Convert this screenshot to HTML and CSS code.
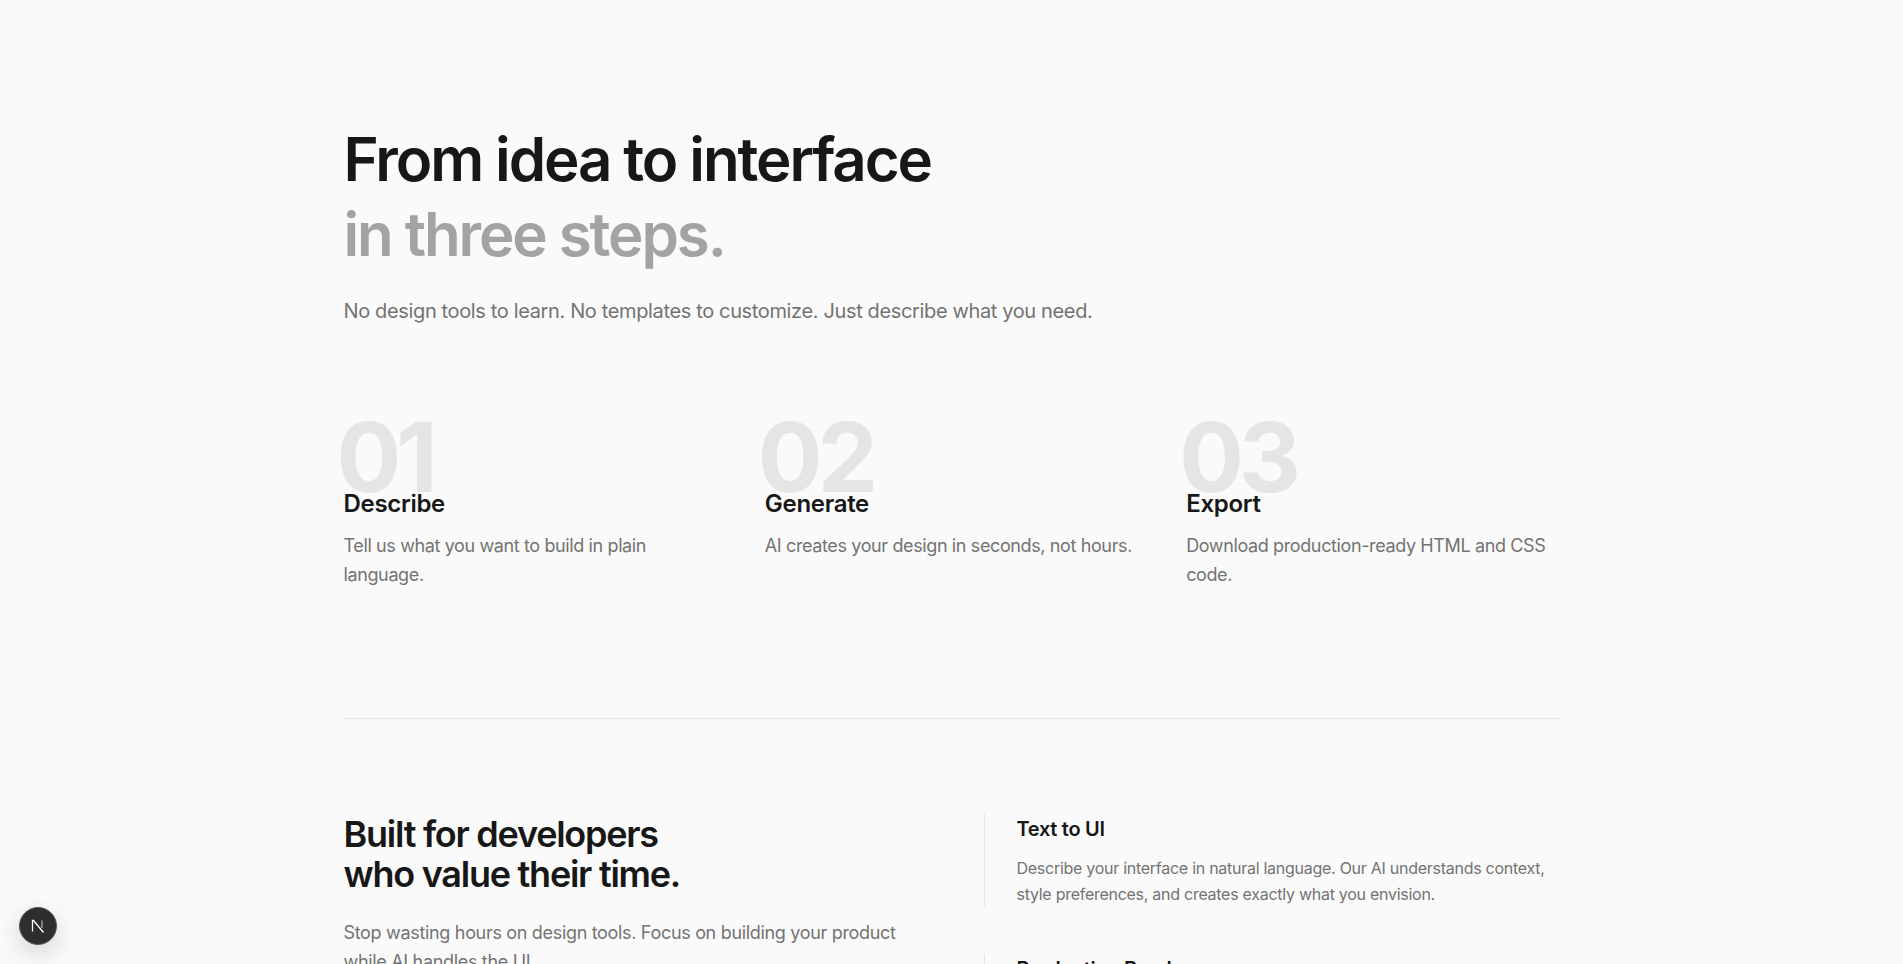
FILE: index.html
```html
<!DOCTYPE html>
<html lang="en">

<head>
    <meta charset="UTF-8">
    <title>From idea to interface</title>
    <link rel="stylesheet" href="styles.css">
</head>

<body>
    <main class="container">
        <section class="steps">
            <h1>From idea to interface<br><span class="muted">in three steps.</span></h1>
            <p class="lead">No design tools to learn. No templates to customize. Just describe what you need.</p>

            <div class="steps-grid">
                <div class="step">
                    <div class="step-num">01</div>
                    <h3>Describe</h3>
                    <p>Tell us what you want to build in plain language.</p>
                </div>
                <div class="step">
                    <div class="step-num">02</div>
                    <h3>Generate</h3>
                    <p>AI creates your design in seconds, not hours.</p>
                </div>
                <div class="step">
                    <div class="step-num">03</div>
                    <h3>Export</h3>
                    <p>Download production-ready HTML and CSS code.</p>
                </div>
            </div>
        </section>

        <section class="features">
            <div class="features-intro">
                <h2>Built for developers<br>who value their time.</h2>
                <p>Stop wasting hours on design tools. Focus on building your product while AI handles the UI.</p>
            </div>
            <div class="features-list">
                <div class="feature">
                    <h4>Text to UI</h4>
                    <p>Describe your interface in natural language. Our AI understands context, style preferences, and creates exactly what you envision.</p>
                </div>
                <div class="feature">
                    <h4>Production Ready</h4>
                    <p>Get clean HTML and CSS code you can ship right away, with no cleanup needed.</p>
                </div>
            </div>
        </section>
    </main>

    <div class="dev-badge">
        <svg width="14" height="14" viewBox="0 0 14 14" fill="none">
            <path d="M1.5 12.5V1.5h1L12.5 13.5" stroke="#fff" stroke-width="1.3"/>
            <path d="M11 1.5v7.5" stroke="#aaa" stroke-width="1.3"/>
        </svg>
    </div>
</body>

</html>
```

FILE: styles.css
```css
html,
body {
    height: 100%;
    overflow: hidden;
}

body {
    font-family: Inter, "Noto Sans", sans-serif;
    background-color: #fafafa;
    color: #171717;
    margin: 0;
}

h1,
h2,
h3,
h4,
p {
    margin: 0;
}

.container {
    width: 1216px;
    margin: 0 auto;
}

.steps {
    padding-top: 122px;
    padding-bottom: 129px;
    border-bottom: 1px solid #e5e5e5;
}

h1 {
    font-size: 60px;
    line-height: 75px;
    font-weight: 600;
    letter-spacing: -2.1px;
}

.muted {
    color: #a3a3a3;
}

.lead {
    margin-top: 25px;
    font-size: 20px;
    line-height: 28px;
    color: #737373;
    letter-spacing: -0.36px;
}

.steps-grid {
    display: grid;
    grid-template-columns: repeat(3, 1fr);
    gap: 48px;
    margin-top: 82px;
}

.step-num {
    font-size: 96px;
    line-height: 100px;
    font-weight: 700;
    color: #e5e5e5;
    margin-left: -7px;
    margin-bottom: -19px;
    letter-spacing: -5px;
}

.step h3 {
    position: relative;
    font-size: 24px;
    line-height: 32px;
    font-weight: 600;
    letter-spacing: -0.3px;
    margin-bottom: 11px;
}

.step p {
    font-size: 18px;
    line-height: 29px;
    color: #737373;
    letter-spacing: -0.38px;
}

.features {
    display: grid;
    grid-template-columns: 1fr 1fr;
    gap: 64px;
    padding-top: 95px;
}

h2 {
    font-size: 36px;
    line-height: 40px;
    font-weight: 600;
    letter-spacing: -1.25px;
    margin-bottom: 24px;
}

.features-intro p {
    font-size: 18px;
    line-height: 29px;
    color: #737373;
    letter-spacing: -0.32px;
}

.features-list {
    display: flex;
    flex-direction: column;
    gap: 47px;
}

.feature {
    border-left: 1px solid #e5e5e5;
    padding-left: 32px;
}

.feature h4 {
    font-size: 20px;
    line-height: 28px;
    font-weight: 600;
    letter-spacing: -0.3px;
    margin-top: 1px;
    margin-bottom: 12px;
}

.feature p {
    font-size: 16px;
    line-height: 26px;
    color: #737373;
    letter-spacing: -0.27px;
}

.dev-badge {
    position: fixed;
    left: 19px;
    bottom: 19px;
    width: 38px;
    height: 38px;
    border-radius: 50%;
    background-color: #2e2e2e;
    border: 1px solid #555;
    box-sizing: border-box;
    box-shadow: 0 8px 24px rgba(0, 0, 0, 0.16);
    display: flex;
    align-items: center;
    justify-content: center;
}
```
